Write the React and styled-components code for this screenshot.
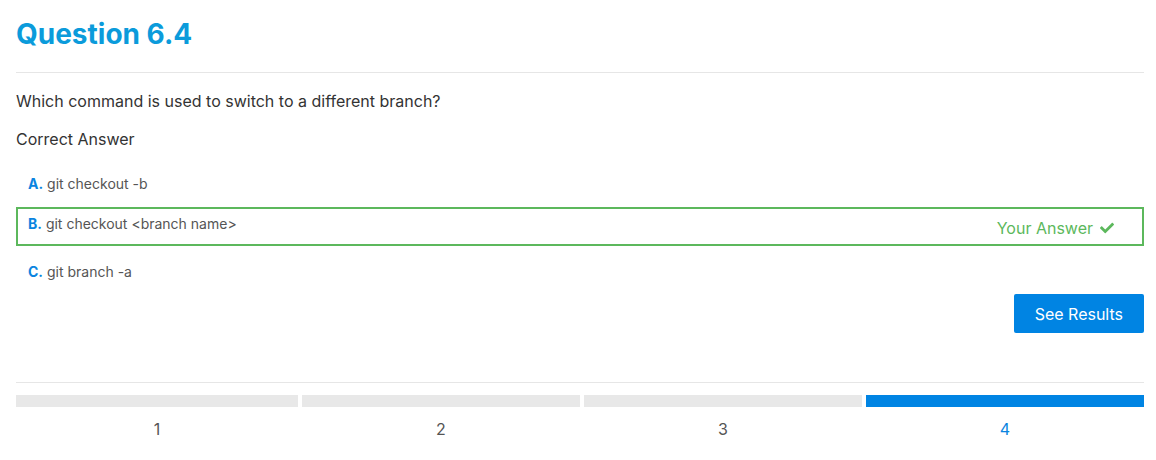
import React from 'react'
import styled, { createGlobalStyle } from 'styled-components';
import { FaCheck } from "react-icons/fa";

const GlobalStyle = createGlobalStyle`
    body {
        margin: 0;
        background: #fff;
        font-family: Inter, "Noto Sans", sans-serif;
    }
`

const options = [
    { letter: 'A', text: 'git checkout -b' },
    { letter: 'B', text: 'git checkout <branch name>', selected: true },
    { letter: 'C', text: 'git branch -a' },
]

const steps = [1, 2, 3, 4];
const current = 4;

const App = () => {
    return(
        <Page>
            <GlobalStyle />
            <Title>Question 6.4</Title>
            <Divider />
            <Question>Which command is used to switch to a different branch?</Question>
            <Label>Correct Answer</Label>

            <OptionList>
                {options.map(o => (
                    <Option key={o.letter} selected={o.selected}>
                        <span><Letter>{o.letter}.</Letter> {o.text}</span>
                        {o.selected && (
                            <YourAnswer>Your Answer <FaCheck size={14} /></YourAnswer>
                        )}
                    </Option>
                ))}
            </OptionList>

            <Actions>
                <ResultsBtn>See Results</ResultsBtn>
            </Actions>

            <Divider $bottom />

            <Steps>
                {steps.map(s => (
                    <Step key={s}>
                        <Bar active={s === current} />
                        <StepNum active={s === current}>{s}</StepNum>
                    </Step>
                ))}
            </Steps>
        </Page>
    )
}

const Page = styled.div`
    padding: 16px 12px 0 16px;
    width: 1128px;
`

const Title = styled.h1`
    margin: 0;
    font-size: 28px;
    line-height: 36px;
    font-weight: 700;
    color: #0b9bdb;
`

const Divider = styled.div`
    height: 1px;
    background: #e6e6e6;
    margin-top: ${ props => props.$bottom ? '49px' : '20px' };
`

const Question = styled.div`
    margin-top: 16px;
    font-size: 16px;
    line-height: 24px;
    color: #333;
`

const Label = styled.div`
    margin-top: 14px;
    font-size: 16px;
    line-height: 24px;
    color: #333;
`

const OptionList = styled.div`
    margin-top: 16px;
    display: flex;
    flex-direction: column;
`

const Option = styled.div`
    display: flex;
    justify-content: space-between;
    align-items: flex-start;
    height: 39px;
    box-sizing: border-box;
    padding: 6px 28px 0 10px;
    border: 2px solid ${ props => props.selected ? '#5cb85c' : 'transparent' };
    margin: ${ props => props.selected ? '1px 0 9px' : '0' };
    font-size: 14px;
    line-height: 18px;
    color: #555;
`

const Letter = styled.span`
    color: #0a84e0;
    font-weight: 700;
`

const YourAnswer = styled.span`
    display: flex;
    align-items: center;
    gap: 7px;
    margin-top: 3px;
    font-size: 16px;
    line-height: 20px;
    color: #5cb85c;
`

const Actions = styled.div`
    display: flex;
    justify-content: flex-end;
    margin-top: 0;
`

const ResultsBtn = styled.button`
    height: 39px;
    padding: 0 21px;
    border: none;
    border-radius: 2px;
    background-color: #0084e3;
    color: #fff;
    font-family: Inter, "Noto Sans", sans-serif;
    font-size: 16px;
    cursor: pointer;
`

const Steps = styled.div`
    display: grid;
    grid-template-columns: 282px repeat(3, 1fr);
    gap: 4px;
    margin-top: 12px;
`

const Step = styled.div`
    display: flex;
    flex-direction: column;
    align-items: center;
`

const Bar = styled.div`
    width: 100%;
    height: 12px;
    background: ${ props => props.active ? '#0084e3' : '#e8e8e8' };
`

const StepNum = styled.div`
    margin-top: 10px;
    font-size: 16px;
    line-height: 24px;
    color: ${ props => props.active ? '#0a84e0' : '#555' };
`

export default App
